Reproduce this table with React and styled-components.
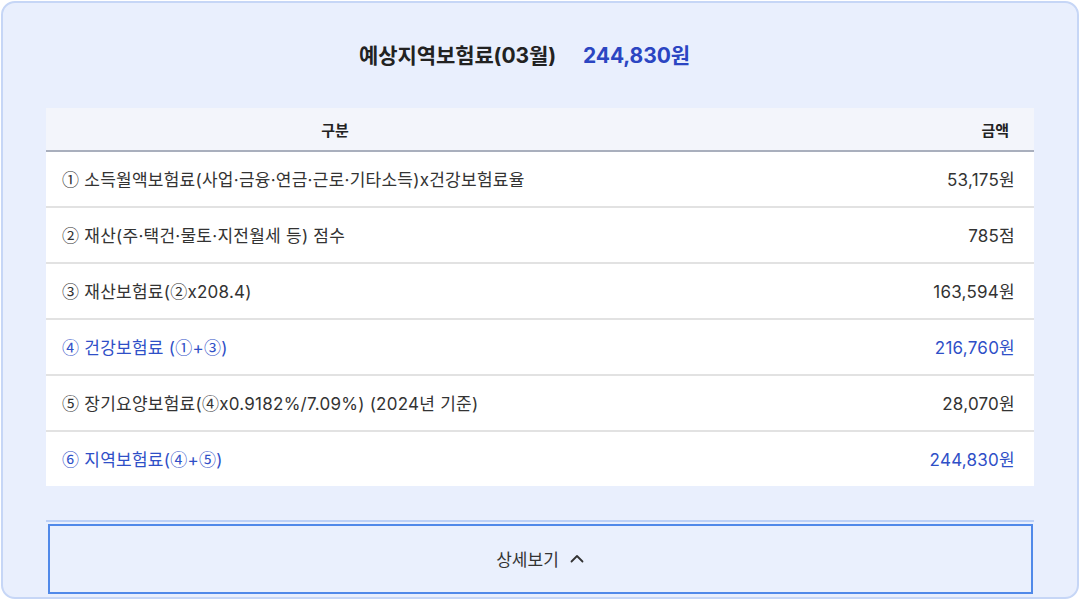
import React from 'react';
import styled, { createGlobalStyle } from 'styled-components';

const GlobalStyle = createGlobalStyle`
  html, body {
    margin: 0;
    padding: 0;
    background: #ffffff;
  }
  body {
    font-family: Inter, "Noto Sans CJK KR", sans-serif;
    color: #333;
  }
`;

const rows = [
  { label: '① 소득월액보험료(사업·금융·연금·근로·기타소득)x건강보험료율', value: '53,175원' },
  { label: '② 재산(주·택건·물토·지전월세 등) 점수', value: '785점' },
  { label: '③ 재산보험료(②x208.4)', value: '163,594원' },
  { label: '④ 건강보험료 (①+③)', value: '216,760원', accent: true },
  { label: '⑤ 장기요양보험료(④x0.9182%/7.09%) (2024년 기준)', value: '28,070원' },
  { label: '⑥ 지역보험료(④+⑤)', value: '244,830원', accent: true },
];

// circled numbers come out too big in Inter, so give them the CJK face
const withCircled = (text) =>
  text.split(/([①-⑥])/).map((part, i) =>
    /[①-⑥]/.test(part) ? <Circled key={i}>{part}</Circled> : part
  );

function App() {
  return (
    <>
      <GlobalStyle />
      <Card>
        <Heading>
          <HeadingLabel>예상지역보험료(03월)</HeadingLabel>
          <HeadingAmount>244,830원</HeadingAmount>
        </Heading>

        <Table>
          <thead>
            <tr>
              <Th>구분</Th>
              <Th $right>금액</Th>
            </tr>
          </thead>
          <tbody>
            {rows.map((row) => (
              <Tr key={row.label}>
                <Td $accent={row.accent}>{withCircled(row.label)}</Td>
                <Td $accent={row.accent} $right>{row.value}</Td>
              </Tr>
            ))}
          </tbody>
        </Table>

        <Divider />

        <MoreButton type="button">
          상세보기
          <svg width="16" height="16" viewBox="0 0 16 16" fill="none">
            <path d="M2.5 10.5 L8 5 L13.5 10.5" stroke="#333" strokeWidth="1.8" strokeLinecap="round" strokeLinejoin="round" />
          </svg>
        </MoreButton>
      </Card>
    </>
  );
}

export default App;

const Card = styled.div`
  box-sizing: border-box;
  margin: 1px 0 0 1px;
  width: 1078px;
  height: 598px;
  background: #e9effd;
  border: 2px solid #c6d6f6;
  border-radius: 14px;
  padding: 0 42px 0 43px;
  display: flex;
  flex-direction: column;
  overflow: hidden;

  & > * {
    flex-shrink: 0;
  }
`;

const Heading = styled.div`
  height: 105px;
  padding-bottom: 4px;
  box-sizing: border-box;
  display: flex;
  align-items: center;
  justify-content: center;
  gap: 27px;
  padding-right: 32px;
  font-size: 21px;
  font-weight: 700;
  letter-spacing: -0.1px;
`;

const HeadingLabel = styled.span`
  color: #222;
`;

const HeadingAmount = styled.span`
  color: #2b45c2;
`;

const Table = styled.table`
  width: 988px;
  border-collapse: collapse;
  background: #ffffff;
  font-size: 17px;
`;

const Th = styled.th`
  height: 42px;
  background: #f3f5fb;
  border-bottom: 2px solid #a9afbd;
  font-size: 15px;
  font-weight: 700;
  color: #222;
  text-align: ${(p) => (p.$right ? 'right' : 'center')};
  padding: ${(p) => (p.$right ? '0 25px 0 0' : '0')};
  width: ${(p) => (p.$right ? 'auto' : '578px')};
`;

const Tr = styled.tr`
  & + & td {
    border-top: 2px solid #e2e2e2;
  }
`;

const Td = styled.td`
  height: 52px;
  padding: ${(p) => (p.$right ? '0 19px 2px 0' : '0 0 2px 16px')};
  text-align: ${(p) => (p.$right ? 'right' : 'left')};
  color: ${(p) => (p.$accent ? '#2f4fc7' : '#333')};
  white-space: nowrap;
  letter-spacing: 0.25px;
`;

const Circled = styled.span`
  font-family: "Noto Sans CJK KR", sans-serif;
`;

const Divider = styled.div`
  margin-top: 34px;
  height: 2px;
  width: 988px;
  background: #bcd0f6;
`;

const MoreButton = styled.button`
  box-sizing: border-box;
  margin: 2px 0 0 2px;
  width: 985px;
  height: 70px;
  padding-bottom: 2px;
  background: #eaf0fd;
  border: 2px solid #5089e9;
  display: flex;
  align-items: center;
  justify-content: center;
  gap: 10px;
  font-family: Inter, "Noto Sans CJK KR", sans-serif;
  font-size: 17px;
  color: #333;
  cursor: pointer;
`;
